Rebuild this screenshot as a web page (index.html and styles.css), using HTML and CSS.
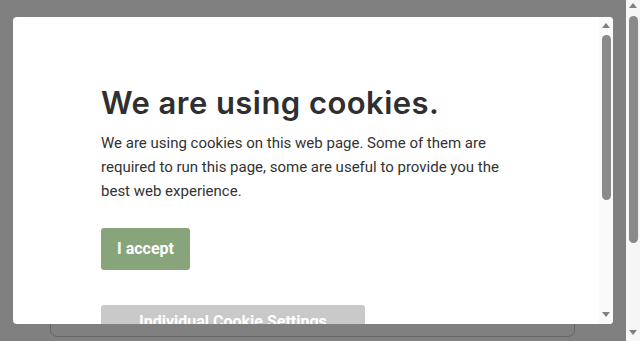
FILE: index.html
```html
<!DOCTYPE html>
<html lang="en">

<head>
    <meta charset="UTF-8">
    <meta name="viewport" content="width=device-width, initial-scale=1.0">
    <title>Cookies</title>
    <link rel="stylesheet" href="styles.css">
</head>

<body>
    <div class="page">
        <div class="screen">
            <!-- page behind the mask -->
            <div class="behind-card"></div>

            <div class="modal">
                <div class="modal-body">
                    <h1 class="modal-title">We are using cookies.</h1>
                    <p class="modal-text">We are using cookies on this web page. Some of them are required to run this page, some are useful to provide you the best web experience.</p>
                    <div class="actions">
                        <a class="btn btn-accept" href="javascript:;">I accept</a>
                        <a class="btn btn-settings" href="javascript:;">Individual Cookie Settings</a>
                    </div>
                </div>
                <div class="scrollbar modal-scroll">
                    <span class="arrow-up"></span>
                    <span class="thumb"></span>
                    <span class="arrow-down"></span>
                </div>
            </div>
        </div>
        <div class="scrollbar page-scroll">
            <span class="arrow-up"></span>
            <span class="thumb"></span>
            <span class="arrow-down"></span>
        </div>
    </div>
</body>

</html>
```

FILE: styles.css
```css
* {
    margin: 0;
    padding: 0;
    box-sizing: border-box;
}

html,
body {
    width: 640px;
    height: 341px;
    overflow: hidden;
}

body {
    font-family: Roboto, "Liberation Sans", sans-serif;
    color: #333;
}

a {
    text-decoration: none;
}

.page {
    display: flex;
    height: 341px;
}

.screen {
    position: relative;
    flex: 1;
    background-color: #808080;
    padding-top: 200px;
}

.behind-card {
    width: 525px;
    height: 137px;
    margin-left: 50px;
    border: 1px solid #676767;
    border-radius: 7px;
}

.modal {
    position: absolute;
    top: 17px;
    left: 13px;
    width: 600px;
    height: 307px;
    display: flex;
    background-color: #fff;
    border-radius: 4px;
    overflow: hidden;
}

.modal-body {
    flex: 1;
    padding: 66px 0 0 88px;
}

.modal-title {
    font-family: Inter, "Open Sans", sans-serif;
    font-weight: 600;
    font-size: 31px;
    line-height: 40px;
    letter-spacing: 0.45px;
    color: #2f2f2f;
}

.modal-text {
    width: 404px;
    margin-top: 8px;
    font-size: 15px;
    line-height: 24px;
    color: #333;
}

.actions {
    margin-top: 25px;
}

.btn {
    display: block;
    width: fit-content;
    height: 42px;
    padding: 0 16px;
    border-radius: 3px;
    font-weight: 700;
    font-size: 16px;
    line-height: 42px;
    color: #fff;
}

.btn-accept {
    background-color: #88a47a;
}

.btn-settings {
    margin-top: 35px;
    padding: 0 38px;
    line-height: 34px;
    background-color: #c9c9c9;
}

/* fake scroll bars */
.scrollbar {
    display: flex;
    flex-direction: column;
    align-items: center;
    width: 14px;
}

.modal-scroll {
    background-color: #fafafa;
    padding: 6px 0 7px;
}

.page-scroll {
    background-color: #f6f6f6;
    padding: 3px 0 6px;
}

.arrow-up,
.arrow-down {
    width: 0;
    height: 0;
    border-left: 4px solid transparent;
    border-right: 4px solid transparent;
}

.arrow-up {
    border-bottom: 5px solid #808080;
}

.arrow-down {
    margin-top: auto;
    border-top: 5px solid #808080;
}

.thumb {
    width: 9px;
    border-radius: 5px;
    background-color: #8a8a8a;
}

.modal-scroll .thumb {
    height: 165px;
    margin-top: 7px;
}

.page-scroll .thumb {
    height: 227px;
    margin-top: 8px;
}
```
